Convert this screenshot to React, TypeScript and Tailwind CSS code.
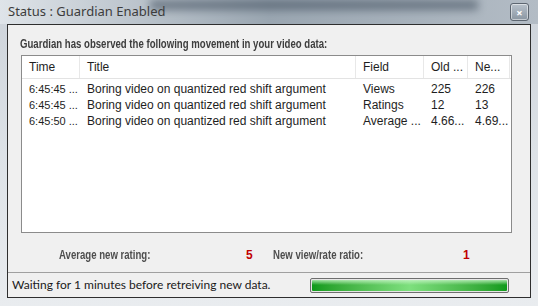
import React from 'react';

const ROWS = [
  { time: '6:45:45 ...', title: 'Boring video on quantized red shift argument', field: 'Views', old: '225', nw: '226' },
  { time: '6:45:45 ...', title: 'Boring video on quantized red shift argument', field: 'Ratings', old: '12', nw: '13' },
  { time: '6:45:50 ...', title: 'Boring video on quantized red shift argument', field: 'Average ...', old: '4.66...', nw: '4.69...' },
];

// column widths of the list view
const COLS = ['w-[58px]', 'w-[276px]', 'w-[68px]', 'w-[44px]', 'w-[42px]'];

export default function App() {
  const sans = { fontFamily: '"Liberation Sans", Arial, sans-serif' };

  return (
    <div className="relative h-[306px] w-[538px] overflow-hidden bg-gradient-to-b from-[#cdd3da] via-[#dde2e7] to-[#e9ecef]">
      {/* glass title bar */}
      <div className="relative flex h-[24px] items-center justify-between bg-gradient-to-r from-[#dfe4e9] via-[#9aa6b1] to-[#b3bcc5] pl-[8px] pr-[9px]">
        <div className="absolute left-[150px] right-[60px] top-0 h-[10px] bg-[#3f4d5c] opacity-60 blur-[4px]" />
        <span className="relative text-[13px] text-[#3c3c3c]" style={{ fontFamily: '"Noto Sans", "Open Sans", sans-serif' }}>
          Status : Guardian Enabled
        </span>
        <div className="relative flex h-[18px] w-[19px] items-center justify-center rounded-[3px] border border-[#5d6670] bg-gradient-to-b from-[#b9c2cb] to-[#8a96a2] text-[11px] font-bold leading-none text-white shadow-[inset_0_0_0_1px_rgba(255,255,255,0.5)]">
          ×
        </div>
      </div>

      {/* client area */}
      <div className="ml-[7px] flex h-[274px] w-[524px] flex-col border border-[#2e2e2e] bg-[#f0f0f0]">
        <div className="pl-[12px] pt-[12px] text-[12px] font-bold leading-[14px] text-[#3d3d3d]" style={sans}>
          <span className="inline-block origin-left scale-x-[0.8] whitespace-nowrap">
            Guardian has observed the following movement in your video data:
          </span>
        </div>

        <div className="ml-[13px] mt-[4px] h-[178px] w-[491px] border border-[#8b8b8b] bg-white" style={sans}>
          <div className="flex h-[23px] items-center border-b border-[#e3e3e3] text-[12px] text-[#1e1e1e]">
            {['Time', 'Title', 'Field', 'Old ...', 'Ne...'].map((h, i) => (
              <div key={h} className={`${COLS[i]} flex h-full items-center whitespace-nowrap border-r border-[#e8e8e8] pl-[7px]`}>
                {h}
              </div>
            ))}
          </div>
          <div className="pt-[2px]">
            {ROWS.map((r, idx) => (
              <div key={idx} className="flex h-[16px] items-center whitespace-nowrap text-[12px] text-[#1e1e1e]">
                <div className={`${COLS[0]} pl-[7px] text-[11px]`}>{r.time}</div>
                <div className={`${COLS[1]} pl-[7px]`}>{r.title}</div>
                <div className={`${COLS[2]} pl-[7px]`}>{r.field}</div>
                <div className={`${COLS[3]} pl-[7px]`}>{r.old}</div>
                <div className={`${COLS[4]} pl-[7px]`}>{r.nw}</div>
              </div>
            ))}
          </div>
        </div>

        <div className="mt-[15px] flex h-[14px] items-center whitespace-nowrap text-[12px] font-bold text-[#4e4e4e]" style={sans}>
          <div className="w-[238px] pl-[51px]">
            <span className="inline-block origin-left scale-x-[0.8]">Average new rating:</span>
          </div>
          <div className="w-[27px] text-[#c00000]">5</div>
          <div className="w-[190px]">
            <span className="inline-block origin-left scale-x-[0.8]">New view/rate ratio:</span>
          </div>
          <div className="text-[#c00000]">1</div>
        </div>

        <div className="mt-[10px] flex flex-1 items-center justify-between border-t border-[#a0a0a0] pl-[4px] pr-[21px]">
          <span className="whitespace-nowrap text-[12px] text-[#1a1a1a]" style={{ fontFamily: 'Lato, "Noto Sans", sans-serif' }}>
            Waiting for 1 minutes before retreiving new data.
          </span>
          <div className="h-[15px] w-[199px] rounded-[2px] border border-[#6e6e6e] bg-[#e6e6e6] p-[1px]">
            <div className="h-full w-full rounded-[1px] bg-gradient-to-r from-[#0c9a1a] via-[#7ee07e] to-[#0c9a1a]">
              <div className="h-[5px] w-full bg-gradient-to-b from-[#c8f5c8] to-transparent opacity-80" />
            </div>
          </div>
        </div>
      </div>
    </div>
  );
}
